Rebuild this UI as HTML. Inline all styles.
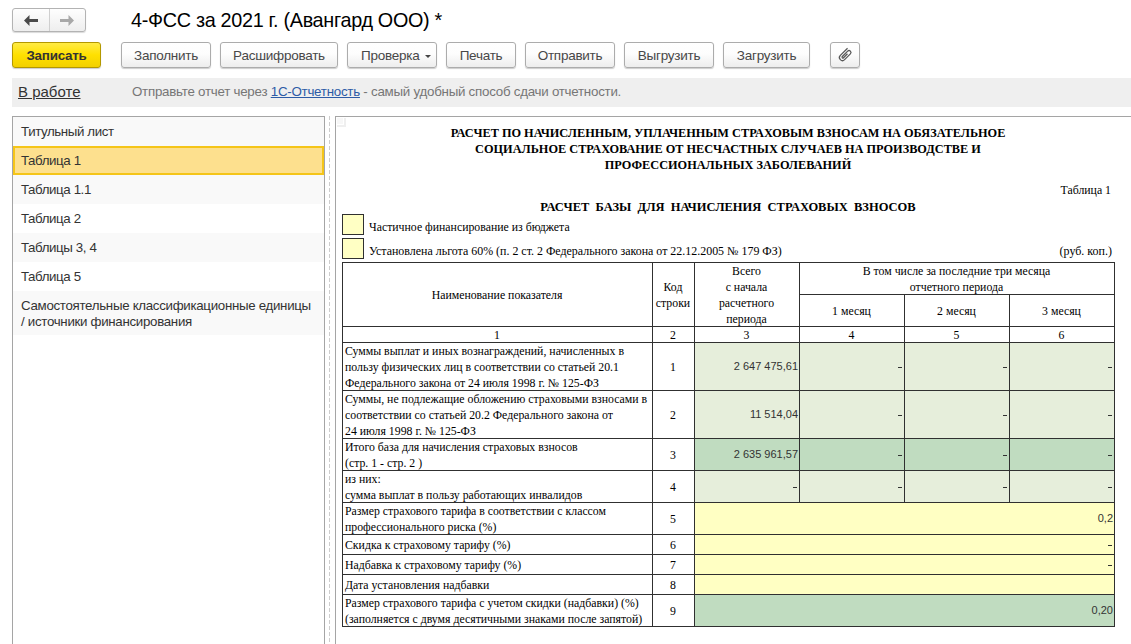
<!DOCTYPE html>
<html><head><meta charset="utf-8">
<style>
*{box-sizing:border-box}
html,body{margin:0;padding:0}
body{width:1131px;height:644px;overflow:hidden;position:relative;background:#fff;font-family:"Liberation Sans",sans-serif;color:#333}
.a{position:absolute;white-space:pre}
.btn{position:absolute;top:42px;height:26px;border:1px solid #acacac;border-radius:3px;background:linear-gradient(#ffffff 0%,#fdfdfd 45%,#ededed 100%);box-shadow:0 1px 1px rgba(0,0,0,.2);font-size:13.5px;letter-spacing:-0.25px;color:#484848;text-align:center;line-height:26px}
.row{position:absolute;left:13px;width:311px;height:29px;font-size:13.3px;letter-spacing:-0.4px;color:#333;padding-left:8px;line-height:29px;white-space:pre}
.g{background:#f9f9f9}
.s{font-family:"Liberation Serif",serif;color:#000;position:absolute;white-space:pre;font-size:11.8px;line-height:16px}
.b{font-weight:bold;font-size:12.3px}
.hl{position:absolute;height:1px;background:#303030}
.vl{position:absolute;width:1px;background:#303030}
.n{position:absolute;font-family:"Liberation Sans",sans-serif;font-size:11px;color:#333;text-align:right;white-space:pre;line-height:16px}
.c{text-align:center}
</style></head><body>

<!-- nav buttons -->
<div class="a" style="left:12px;top:8px;width:74px;height:24px;border:1px solid #b3b3b3;border-radius:3px;background:linear-gradient(#fefefe,#eeeeee);box-shadow:0 1px 1px rgba(0,0,0,.15)"></div>
<div class="a" style="left:49px;top:9px;width:1px;height:22px;background:#cfcfcf"></div>
<svg class="a" style="left:24px;top:15px" width="14" height="11" viewBox="0 0 14 11"><path d="M0 5.5 L5.5 0 L5.5 4 L14 4 L14 7 L5.5 7 L5.5 11 Z" fill="#4a4a4a"/></svg>
<svg class="a" style="left:60px;top:15px" width="14" height="11" viewBox="0 0 14 11"><path d="M14 5.5 L8.5 0 L8.5 4 L0 4 L0 7 L8.5 7 L8.5 11 Z" fill="#a8a8a8"/></svg>

<div class="a" style="left:131px;top:8px;font-size:19.8px;letter-spacing:-0.3px;line-height:24px;color:#000">4-ФСС за 2021 г. (Авангард ООО) *</div>

<!-- command bar -->
<div class="btn" style="left:12px;width:89px;border-color:#b39800;background:linear-gradient(#ffeb45 0%,#ffe000 50%,#f2d000 100%);font-weight:bold;font-size:13.4px;color:#333">Записать</div>
<div class="btn" style="left:121px;width:90px">Заполнить</div>
<div class="btn" style="left:220px;width:118px">Расшифровать</div>
<div class="btn" style="left:347px;width:90px;text-align:left;padding-left:13px">Проверка<span style="position:absolute;left:77px;top:12px;width:0;height:0;border-left:3.5px solid transparent;border-right:3.5px solid transparent;border-top:3.5px solid #444"></span></div>
<div class="btn" style="left:446px;width:70px">Печать</div>
<div class="btn" style="left:525px;width:90px">Отправить</div>
<div class="btn" style="left:624px;width:90px">Выгрузить</div>
<div class="btn" style="left:723px;width:87px">Загрузить</div>
<div class="btn" style="left:830px;width:30px"></div>
<svg class="a" style="left:825px;top:38px" width="40" height="34" viewBox="825 38 40 34"><g transform="translate(845.0 55.0) rotate(45)"><path d="M -3 -6.6 L -3 3.6 A 3 3 0 0 0 3 3.6 L 3 -4.6 A 1.9 1.9 0 0 0 -0.8 -4.6 L -0.8 3.0 A 0.85 0.85 0 0 0 0.9 3.0 L 0.9 -2.6" fill="none" stroke="#585858" stroke-width="1.25"/></g></svg>

<!-- info bar -->
<div class="a" style="left:12px;top:78px;width:1119px;height:29px;background:#efefef"></div>
<div class="a" style="left:18px;top:83px;font-size:15px;line-height:18px;color:#333;text-decoration:underline">В работе</div>
<div class="a" style="left:132px;top:84px;font-size:13.33px;letter-spacing:-0.25px;line-height:16px;color:#767676">Отправьте отчет через <span style="color:#2d5ba6;text-decoration:underline">1С-Отчетность</span> - самый удобный способ сдачи отчетности.</div>

<!-- left panel -->
<div class="a" style="left:12px;top:116px;width:313px;height:540px;border:1px solid #a5a5a5;background:#fff"></div>
<div class="row g" style="top:117px">Титульный лист</div>
<div class="row" style="top:146px;background:#fde08e;border:2px solid #f5c518;padding-left:6px;line-height:25px">Таблица 1</div>
<div class="row g" style="top:175px">Таблица 1.1</div>
<div class="row" style="top:204px">Таблица 2</div>
<div class="row g" style="top:233px">Таблицы 3, 4</div>
<div class="row" style="top:262px">Таблица 5</div>
<div class="row g" style="top:291px;height:44px;line-height:16px;padding-top:7px;letter-spacing:-0.3px">Самостоятельные классификационные единицы
/ источники финансирования</div>

<!-- splitter -->
<div class="a" style="left:329px;top:116px;width:1px;height:528px;background:repeating-linear-gradient(#cdcdcd 0 4px,transparent 4px 6px)"></div>

<!-- report panel -->
<div class="a" style="left:335px;top:116px;width:800px;height:540px;border-left:1px solid #a5a5a5;border-top:1px solid #a5a5a5"></div>
<div class="a" style="left:337px;top:118px;width:9px;height:9px;background:#efefef"></div><div class="a" style="left:336px;top:117px;width:8px;height:8px;background:#fff"></div><div class="a" style="left:337px;top:118px;width:6px;height:6px;background:#f7f7f7"></div>

<!-- report header -->
<div class="s b c" style="left:342px;width:772px;top:125px">РАСЧЕТ ПО НАЧИСЛЕННЫМ, УПЛАЧЕННЫМ СТРАХОВЫМ ВЗНОСАМ НА ОБЯЗАТЕЛЬНОЕ
СОЦИАЛЬНОЕ СТРАХОВАНИЕ ОТ НЕСЧАСТНЫХ СЛУЧАЕВ НА ПРОИЗВОДСТВЕ И
ПРОФЕССИОНАЛЬНЫХ ЗАБОЛЕВАНИЙ</div>
<div class="s" style="left:900px;width:211px;top:182px;text-align:right">Таблица 1</div>
<div class="s b c" style="left:342px;width:772px;top:199px;font-size:12.5px">РАСЧЕТ  БАЗЫ  ДЛЯ  НАЧИСЛЕНИЯ  СТРАХОВЫХ  ВЗНОСОВ</div>

<div class="a" style="left:342px;top:214px;width:22px;height:21px;border:1px solid #303030;background:#ffffc4"></div>
<div class="s" style="left:369px;top:219px">Частичное финансирование из бюджета</div>
<div class="a" style="left:342px;top:238px;width:22px;height:21px;border:1px solid #303030;background:#ffffc4"></div>
<div class="s" style="left:369px;top:243px;font-size:11.95px">Установлена льгота 60% (п. 2 ст. 2 Федерального закона от 22.12.2005 № 179 ФЗ)</div>
<div class="s" style="left:900px;width:212px;top:243px;text-align:right;font-size:12px">(руб. коп.)</div>

<!-- TABLE -->
<div class="a" style="left:694px;top:342px;width:420px;height:96px;background:#e6eedb"></div>
<div class="a" style="left:694px;top:438px;width:420px;height:32px;background:#c0dcc0"></div>
<div class="a" style="left:694px;top:470px;width:420px;height:32px;background:#e6eedb"></div>
<div class="a" style="left:694px;top:502px;width:420px;height:92px;background:#ffffc3"></div>
<div class="a" style="left:694px;top:594px;width:420px;height:32px;background:#c0dcc0"></div>
<div class="hl" style="left:342px;top:262px;width:773px"></div>
<div class="hl" style="left:342px;top:326px;width:773px"></div>
<div class="hl" style="left:342px;top:342px;width:773px"></div>
<div class="hl" style="left:342px;top:390px;width:773px"></div>
<div class="hl" style="left:342px;top:438px;width:773px"></div>
<div class="hl" style="left:342px;top:470px;width:773px"></div>
<div class="hl" style="left:342px;top:502px;width:773px"></div>
<div class="hl" style="left:342px;top:534px;width:773px"></div>
<div class="hl" style="left:342px;top:554px;width:773px"></div>
<div class="hl" style="left:342px;top:574px;width:773px"></div>
<div class="hl" style="left:342px;top:594px;width:773px"></div>
<div class="hl" style="left:342px;top:626px;width:773px"></div>
<div class="hl" style="left:799px;top:294px;width:316px"></div>
<div class="vl" style="left:342px;top:262px;height:365px"></div>
<div class="vl" style="left:652px;top:262px;height:365px"></div>
<div class="vl" style="left:694px;top:262px;height:365px"></div>
<div class="vl" style="left:1114px;top:262px;height:365px"></div>
<div class="vl" style="left:799px;top:262px;height:241px"></div>
<div class="vl" style="left:904px;top:294px;height:209px"></div>
<div class="vl" style="left:1009px;top:294px;height:209px"></div>
<div class="s c" style="left:342px;width:310px;top:287px">Наименование показателя</div>
<div class="s c" style="left:652px;width:42px;top:279px">Код
строки</div>
<div class="s c" style="left:694px;width:105px;top:263px">Всего
с начала
расчетного
периода</div>
<div class="s c" style="left:799px;width:315px;top:263px">В том числе за последние три месяца
отчетного периода</div>
<div class="s c" style="left:799px;width:105px;top:303px">1 месяц</div>
<div class="s c" style="left:904px;width:105px;top:303px">2 месяц</div>
<div class="s c" style="left:1009px;width:105px;top:303px">3 месяц</div>
<div class="s c" style="left:342px;width:310px;top:327px">1</div>
<div class="s c" style="left:652px;width:42px;top:327px">2</div>
<div class="s c" style="left:694px;width:105px;top:327px">3</div>
<div class="s c" style="left:799px;width:105px;top:327px">4</div>
<div class="s c" style="left:904px;width:105px;top:327px">5</div>
<div class="s c" style="left:1009px;width:105px;top:327px">6</div>
<div class="s" style="left:345px;top:343px">Суммы выплат и иных вознаграждений, начисленных в
пользу физических лиц в соответствии со статьей 20.1
Федерального закона от 24 июля 1998 г. № 125-ФЗ</div>
<div class="s c" style="left:652px;width:42px;top:359px">1</div>
<div class="n" style="left:599px;width:199px;top:358px">2 647 475,61</div>
<div class="a" style="left:898px;top:367px;width:4px;height:1px;background:#333"></div>
<div class="a" style="left:1003px;top:367px;width:4px;height:1px;background:#333"></div>
<div class="a" style="left:1108px;top:367px;width:4px;height:1px;background:#333"></div>
<div class="s" style="left:345px;top:391px">Суммы, не подлежащие обложению страховыми взносами в
соответствии со статьей 20.2 Федерального закона от
24 июля 1998 г. № 125-ФЗ</div>
<div class="s c" style="left:652px;width:42px;top:407px">2</div>
<div class="n" style="left:599px;width:199px;top:406px">11 514,04</div>
<div class="a" style="left:898px;top:415px;width:4px;height:1px;background:#333"></div>
<div class="a" style="left:1003px;top:415px;width:4px;height:1px;background:#333"></div>
<div class="a" style="left:1108px;top:415px;width:4px;height:1px;background:#333"></div>
<div class="s" style="left:345px;top:439px">Итого база для начисления страховых взносов
(стр. 1 - стр. 2 )</div>
<div class="s c" style="left:652px;width:42px;top:447px">3</div>
<div class="n" style="left:599px;width:199px;top:446px">2 635 961,57</div>
<div class="a" style="left:898px;top:455px;width:4px;height:1px;background:#333"></div>
<div class="a" style="left:1003px;top:455px;width:4px;height:1px;background:#333"></div>
<div class="a" style="left:1108px;top:455px;width:4px;height:1px;background:#333"></div>
<div class="s" style="left:345px;top:471px">из них:
сумма выплат в пользу работающих инвалидов</div>
<div class="s c" style="left:652px;width:42px;top:479px">4</div>
<div class="a" style="left:793px;top:487px;width:4px;height:1px;background:#333"></div>
<div class="a" style="left:898px;top:487px;width:4px;height:1px;background:#333"></div>
<div class="a" style="left:1003px;top:487px;width:4px;height:1px;background:#333"></div>
<div class="a" style="left:1108px;top:487px;width:4px;height:1px;background:#333"></div>
<div class="s" style="left:345px;top:503px">Размер страхового тарифа в соответствии с классом
профессионального риска (%)</div>
<div class="s c" style="left:652px;width:42px;top:511px">5</div>
<div class="n" style="left:914px;width:199px;top:510px">0,2</div>
<div class="s" style="left:345px;top:537px">Скидка к страховому тарифу (%)</div>
<div class="s c" style="left:652px;width:42px;top:537px">6</div>
<div class="a" style="left:1108px;top:545px;width:4px;height:1px;background:#333"></div>
<div class="s" style="left:345px;top:557px">Надбавка к страховому тарифу (%)</div>
<div class="s c" style="left:652px;width:42px;top:557px">7</div>
<div class="a" style="left:1108px;top:565px;width:4px;height:1px;background:#333"></div>
<div class="s" style="left:345px;top:577px">Дата установления надбавки</div>
<div class="s c" style="left:652px;width:42px;top:577px">8</div>
<div class="s" style="left:345px;top:595px">Размер страхового тарифа с учетом скидки (надбавки) (%)
(заполняется с двумя десятичными знаками после запятой)</div>
<div class="s c" style="left:652px;width:42px;top:603px">9</div>
<div class="n" style="left:914px;width:199px;top:602px">0,20</div>
<!-- /TABLE -->
</body></html>
